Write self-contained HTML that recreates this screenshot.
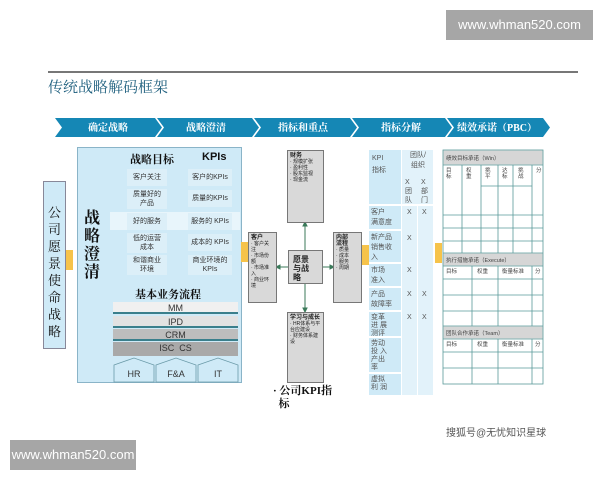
<!DOCTYPE html>
<html><head><meta charset="utf-8"><style>
body{margin:0;width:600px;height:480px;background:#fff;position:relative;overflow:hidden;font-family:"Liberation Sans","Noto Sans CJK SC",sans-serif;}
.a{position:absolute;box-sizing:border-box;}
.wm{background:#a6a6a6;color:#fff;font-size:13px;text-align:center;line-height:30px;}
.serif{font-family:"Liberation Serif","Noto Serif CJK SC",serif;font-weight:bold;}
.lb{background:#cfeaf7;}
.sb{background:#dceff8;font-size:7px;color:#333;text-align:center;line-height:9px;display:flex;align-items:center;justify-content:center;}
.gb{background:#d9d9d9;border:1px solid #777;font-size:5px;color:#222;padding:2px;line-height:6px;}
.bar{left:113px;width:125px;height:12px;font-size:9px;text-align:center;line-height:12px;color:#333;border-bottom:2px solid #3a7f8c;}
.kc{font-size:7px;color:#555;line-height:10px;}
.or{background:#f6c34a;width:7px;height:20px;}
</style></head><body>
<div class="a wm" style="left:446px;top:10px;width:147px;height:30px;">www.whman520.com</div>
<div class="a wm" style="left:10px;top:440px;width:126px;height:30px;">www.whman520.com</div>
<div class="a" style="left:48px;top:71px;width:530px;height:2px;background:#777;"></div>
<div class="a serif" style="left:48px;top:76px;font-size:15px;color:#1e5f7e;font-weight:normal;">传统战略解码框架</div>

<svg class="a" style="left:0;top:0" width="600" height="480">
<polygon points="55,118 155,118 162,127.5 155,137 55,137 62,127.5" fill="#1587b5"/>
<polygon points="157,118 252,118 259,127.5 252,137 157,137 164,127.5" fill="#1587b5"/>
<polygon points="254,118 350,118 357,127.5 350,137 254,137 261,127.5" fill="#1587b5"/>
<polygon points="352,118 445,118 452,127.5 445,137 352,137 359,127.5" fill="#1587b5"/>
<polygon points="447,118 543,118 550,127.5 543,137 447,137 454,127.5" fill="#1587b5"/>
<g font-family="Liberation Serif,Noto Serif CJK SC,serif" font-size="10" fill="#fff" font-weight="bold" text-anchor="middle">
<text x="108" y="131">确定战略</text><text x="206" y="131">战略澄清</text><text x="303" y="131">指标和重点</text><text x="401" y="131">指标分解</text><text x="497" y="131">绩效承诺（PBC）</text></g>
<!-- strategy tree lines -->
<g stroke="#666" stroke-width="0.8" fill="none">
<path d="M117,177 V264 M117,177 H127 M117,199 H127 M117,221 H127 M117,243 H127 M117,264 H127"/>
<path d="M175,178 H184 M175,199 H184 M175,221 H184 M175,243 H184 M175,264 H184"/>
</g>
<!-- center arrows -->
<g stroke="#3b7a5a" stroke-width="1" fill="#3b7a5a">
<path d="M305,250 V224 M305,283 V311 M288,267 H278 M322,267 H332" fill="none"/>
<polygon points="305,222 303,226 307,226"/><polygon points="305,312 303,308 307,308"/>
<polygon points="276,267 280,265 280,269"/><polygon points="334,267 330,265 330,269"/>
</g>
<!-- PBC table -->
<g stroke="#5a9a9a" stroke-width="0.8" fill="none">
<rect x="443" y="150" width="100" height="234"/>
<line x1="443" y1="165" x2="543" y2="165"/>
<path d="M462,165V253 M481,165V253 M498,165V253 M513,165V253 M532,165V253 M481,186H532 M443,215H543 M443,228H543 M443,241H543 M443,253H543"/>
<path d="M443,266H543 M472,266V326 M498,266V326 M532,266V326 M443,279H543 M443,295H543 M443,311H543 M443,326H543"/>
<path d="M443,339H543 M472,339V384 M498,339V384 M532,339V384 M443,352H543 M443,368H543"/>
</g>
<rect x="443.5" y="150.5" width="99" height="14" fill="#d6d6d6"/>
<rect x="443.5" y="253.5" width="99" height="12" fill="#d6d6d6"/>
<rect x="443.5" y="326.5" width="99" height="12" fill="#d6d6d6"/>
<g font-size="5.5" fill="#444" font-family="Liberation Sans,Noto Sans CJK SC,sans-serif">
<text x="446" y="160">绩效目标承诺（Win）</text><text x="446" y="262">执行措施承诺（Execute）</text><text x="446" y="335">团队合作承诺（Team）</text>
<text x="446" y="273">目标</text><text x="477" y="273">权重</text><text x="502" y="273">衡量标准</text><text x="535" y="273">分</text>
<text x="446" y="346">目标</text><text x="477" y="346">权重</text><text x="502" y="346">衡量标准</text><text x="535" y="346">分</text>
<text x="446" y="172">目</text><text x="446" y="178">标</text><text x="466" y="172">权</text><text x="466" y="178">重</text>
<text x="485" y="172">挑</text><text x="485" y="178">平</text><text x="502" y="172">达</text><text x="502" y="178">标</text><text x="518" y="172">挑</text><text x="518" y="178">战</text><text x="536" y="172">分</text>
</g>
</svg>

<!-- left vision box -->
<div class="a lb serif" style="left:43px;top:181px;width:23px;height:168px;border:1px solid #889;font-size:13px;line-height:17px;text-align:center;padding-top:22px;font-weight:normal;color:#111">公<br>司<br>愿<br>景<br>使<br>命<br>战<br>略</div>
<div class="a or" style="left:66px;top:250px;"></div>

<!-- big box -->
<div class="a lb" style="left:77px;top:147px;width:165px;height:236px;border:1px solid #8ab4c8;"></div>
<div class="a serif" style="left:84px;top:210px;font-size:16px;line-height:18px;width:18px;color:#111">战<br>略<br>澄<br>清</div>
<div class="a serif" style="left:130px;top:151px;font-size:11px;color:#111">战略目标</div>
<div class="a" style="left:202px;top:151px;font-size:11px;font-weight:bold;color:#111">KPIs</div>
<div class="a" style="left:110px;top:212px;width:130px;height:18px;background:#e8f5fb;"></div>
<div class="a sb" style="left:127px;top:169px;width:40px;height:17px;">客户关注</div>
<div class="a sb" style="left:127px;top:189px;width:40px;height:20px;">质量好的<br>产品</div>
<div class="a sb" style="left:127px;top:213px;width:40px;height:17px;">好的服务</div>
<div class="a sb" style="left:127px;top:233px;width:40px;height:20px;">低的运营<br>成本</div>
<div class="a sb" style="left:127px;top:255px;width:40px;height:20px;">和谐商业<br>环境</div>
<div class="a sb" style="left:188px;top:169px;width:44px;height:17px;">客户的KPIs</div>
<div class="a sb" style="left:188px;top:190px;width:44px;height:17px;">质量的KPIs</div>
<div class="a sb" style="left:188px;top:213px;width:44px;height:17px;">服务的 KPIs</div>
<div class="a sb" style="left:188px;top:234px;width:44px;height:17px;">成本的 KPIs</div>
<div class="a sb" style="left:188px;top:255px;width:44px;height:20px;">商业环境的<br>KPIs</div>
<div class="a serif" style="left:135px;top:286px;font-size:11px;color:#111">基本业务流程</div>
<div class="a bar" style="top:302px;background:#f0f0f0;">MM</div>
<div class="a bar" style="top:316px;background:#e2e2e2;">IPD</div>
<div class="a bar" style="top:329px;background:#bdbdbd;">CRM</div>
<div class="a bar" style="top:342px;height:14px;background:#a9a9a9;border:none;">ISC&nbsp; CS</div>
<svg class="a" style="left:113px;top:357px" width="126" height="26">
<g fill="#cfeaf7" stroke="#6a9aa8" stroke-width="0.8">
<polygon points="1,8 21,1 41,8 41,25 1,25"/><polygon points="43,8 63,1 83,8 83,25 43,25"/><polygon points="85,8 105,1 125,8 125,25 85,25"/></g>
<g font-size="9" fill="#333" text-anchor="middle" font-family="Liberation Sans,sans-serif"><text x="21" y="20">HR</text><text x="63" y="20">F&amp;A</text><text x="105" y="20">IT</text></g></svg>

<div class="a or" style="left:241px;top:242px;"></div>
<div class="a gb" style="left:248px;top:232px;width:29px;height:71px;"><b style="font-size:6px">客户</b><br>· 客户关注<br>· 市场份额<br>· 市场准入<br>· 商业环境</div>
<div class="a gb" style="left:287px;top:150px;width:37px;height:73px;"><b style="font-size:6px">财务</b><br>· 规模扩张<br>· 盈利性<br>· 股东监视<br>· 现金流</div>
<div class="a gb" style="left:288px;top:250px;width:35px;height:34px;font-size:8px;line-height:9px;font-weight:bold;padding:4px;">愿景<br>与战<br>略</div>
<div class="a gb" style="left:333px;top:232px;width:29px;height:71px;"><b style="font-size:6px">内部<br>流程</b><br>· 质量<br>· 成本<br>· 服务<br>· 周期</div>
<div class="a gb" style="left:287px;top:312px;width:37px;height:71px;"><b style="font-size:6px">学习与成长</b><br>· HR体系与平<br>台应建设<br>· 财务体系建设</div>
<div class="a serif" style="left:273px;top:385px;font-size:11px;line-height:13px;width:70px;color:#111">· 公司KPI指<br>&nbsp;&nbsp;标</div>

<div class="a or" style="left:362px;top:245px;"></div>
<!-- KPI table -->
<div class="a" style="left:369px;top:150px;width:65px;height:246px;background:#fff;"></div>
<div class="a lb" style="left:369px;top:150px;width:32px;height:54px;"></div>
<div class="a" style="left:402px;top:150px;width:31px;height:54px;background:#e2f2fa;"></div>
<div class="a kc" style="left:372px;top:153px;line-height:12px;">KPI<br>指标</div>
<div class="a kc" style="left:404px;top:151px;width:28px;text-align:center;">团队/<br>组织</div>
<div class="a kc" style="left:405px;top:178px;width:10px;line-height:9px;">X<br>团<br>队</div>
<div class="a kc" style="left:421px;top:178px;width:10px;line-height:9px;">X<br>部<br>门</div>
<div class="a lb kc" style="left:369px;top:206px;width:32px;height:23px;padding:2px;">客户<br>满意度</div>
<div class="a lb kc" style="left:369px;top:231px;width:32px;height:31px;padding:2px;">新产品<br>销售收<br>入</div>
<div class="a lb kc" style="left:369px;top:264px;width:32px;height:22px;padding:2px;">市场<br>准入</div>
<div class="a lb kc" style="left:369px;top:288px;width:32px;height:22px;padding:2px;">产品<br>故障率</div>
<div class="a lb kc" style="left:369px;top:312px;width:32px;height:24px;padding:2px;line-height:8px;">变革<br>进 展<br>测评</div>
<div class="a lb kc" style="left:369px;top:338px;width:32px;height:34px;padding:2px;line-height:8px;">劳动<br>投 入<br>产出<br>率</div>
<div class="a lb kc" style="left:369px;top:374px;width:32px;height:21px;padding:2px;line-height:8px;">虚拟<br>利 润</div>
<div class="a" style="left:402px;top:206px;width:15px;height:189px;background:#e2f2fa;"></div>
<div class="a" style="left:418px;top:206px;width:15px;height:189px;background:#e2f2fa;"></div>
<div class="a kc" style="left:407px;top:208px;">X</div><div class="a kc" style="left:422px;top:208px;">X</div>
<div class="a kc" style="left:407px;top:234px;">X</div>
<div class="a kc" style="left:407px;top:266px;">X</div>
<div class="a kc" style="left:407px;top:290px;">X</div><div class="a kc" style="left:422px;top:290px;">X</div>
<div class="a kc" style="left:407px;top:313px;">X</div><div class="a kc" style="left:422px;top:313px;">X</div>

<div class="a or" style="left:435px;top:243px;"></div>
<div class="a" style="left:446px;top:424px;font-size:10px;color:#555;">搜狐号@无忧知识星球</div>
</body></html>
